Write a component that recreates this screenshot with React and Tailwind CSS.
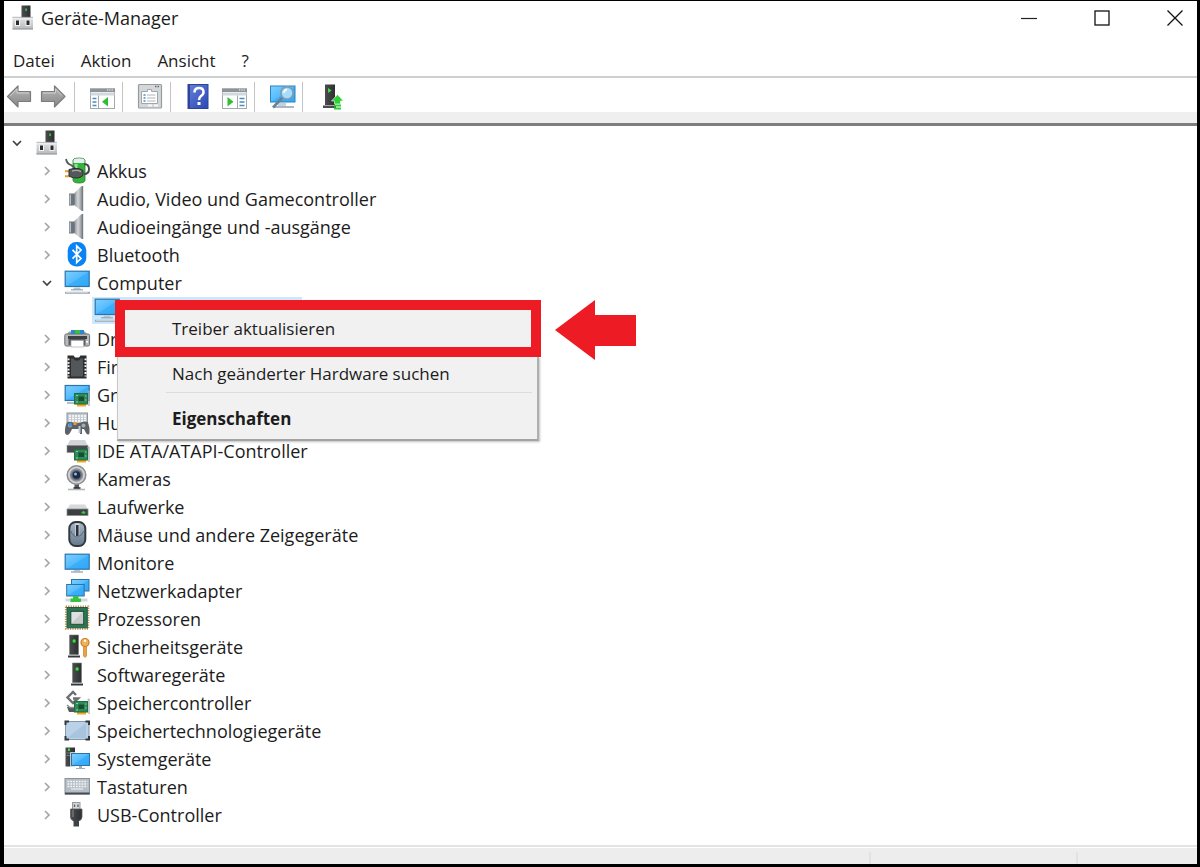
import { useState } from "react";

const Svg = ({ children }) => (
    <svg viewBox="0 0 26 26" className="size-[26px] shrink-0 overflow-visible" aria-hidden="true">
        {children}
    </svg>
);

/* shared gradients, referenced by id from the icons below */
const Gradients = () => (
    <svg className="absolute size-0" aria-hidden="true">
        <defs>
            <linearGradient id="screen" x1="0" y1="0" x2="1" y2="1">
                <stop offset="0" stopColor="#7fd0ff" />
                <stop offset="0.5" stopColor="#55bbfd" />
                <stop offset="0.52" stopColor="#3cb0fb" />
                <stop offset="1" stopColor="#33a6f5" />
            </linearGradient>
            <linearGradient id="metal" x1="0" y1="0" x2="0" y2="1">
                <stop offset="0" stopColor="#e2e3e5" />
                <stop offset="1" stopColor="#b8babd" />
            </linearGradient>
            <linearGradient id="cone" x1="0" y1="0" x2="1" y2="0">
                <stop offset="0" stopColor="#7d8287" />
                <stop offset="0.5" stopColor="#d5d8db" />
                <stop offset="1" stopColor="#85898e" />
            </linearGradient>
            <linearGradient id="dark" x1="0" y1="0" x2="1" y2="0">
                <stop offset="0" stopColor="#4a4c4f" />
                <stop offset="1" stopColor="#2c2e30" />
            </linearGradient>
            <linearGradient id="mouse" x1="0" y1="0" x2="0" y2="1">
                <stop offset="0" stopColor="#a9b9ca" />
                <stop offset="1" stopColor="#65778b" />
            </linearGradient>
            <linearGradient id="arrow" x1="0" y1="0" x2="0" y2="1">
                <stop offset="0" stopColor="#b9b9b9" />
                <stop offset="1" stopColor="#858585" />
            </linearGradient>
            <linearGradient id="help" x1="0" y1="0" x2="1" y2="1">
                <stop offset="0" stopColor="#6680d8" />
                <stop offset="1" stopColor="#2a48b4" />
            </linearGradient>
        </defs>
    </svg>
);

const Card = () => (
    <>
        <rect x="13" y="19" width="9" height="5.5" fill="#f5a81c" />
        <rect x="10.5" y="11.5" width="13" height="10.5" fill="#2f8a57" stroke="#1f6d42" />
        <rect x="14.5" y="14.5" width="5.5" height="4.5" fill="#174d30" />
        <path d="M12 13.5h2M21 14h1.5M12 20h2M21 18h1.5" stroke="#86d3a2" strokeWidth="1.2" />
        <path d="M23.5 9.5h1.5V24" fill="none" stroke="#a9adb0" strokeWidth="1.3" />
    </>
);

const Tower = ({ x = 7, y = 1 }) => (
    <g transform={`translate(${x} ${y})`}>
        <path d="M1.5 0h9v20h-9z" fill="url(#dark)" stroke="#77797b" strokeWidth="0.6" />
        <path d="M0 20.5h12v2H0z" fill="#35373a" />
        <path d="M1 20h10" stroke="#d8d8d8" strokeWidth="0.7" />
        <rect x="4" y="4" width="4" height="4" rx="0.5" fill="#1a5f1d" />
        <rect x="4.7" y="4.5" width="2.8" height="3" rx="0.5" fill="#3ee03d" />
    </g>
);

const DeviceHub = () => (
    <Svg>
        <rect x="11.5" y="0.5" width="9" height="13" fill="url(#dark)" />
        <rect x="15.2" y="3.5" width="1.8" height="2.5" fill="#2fc238" />
        <path d="M2.5 12.5h20.5v11.5H2.5z" fill="url(#metal)" />
        <path d="M2.5 12.5h20.5v2H2.5z" fill="#ededee" />
        <path d="M2.5 12.3h20.5" stroke="#a6a8ab" strokeWidth="0.8" />
        <path d="M2.5 24h20.5" stroke="#97999c" strokeWidth="1.2" />
        <rect x="5" y="15" width="5" height="6" fill="#f3f3f3" />
        <rect x="15.5" y="15" width="5" height="6" fill="#f3f3f3" />
        <rect x="6" y="15.5" width="3" height="4.5" fill="#2a2a2a" />
        <rect x="16.5" y="15.5" width="3" height="4.5" fill="#2a2a2a" />
    </Svg>
);

const Battery = () => (
    <Svg>
        <path d="M9 2q0-2 6-2t6 2v20q0 3-6 3t-6-3z" fill="#34b43a" stroke="#25792a" strokeWidth="0.8" />
        <path d="M9.5 2q0-1.700 5.5-1.700t5.5 1.700v3h-11z" fill="#e4edf2" />
        <path d="M10.500 6h3v4h-3z" fill="#8ae88b" />
        <path d="M2 1q1 5 5 6l4 3" fill="none" stroke="#53575a" strokeWidth="1.8" />
        <path d="M20 6q5 0 5 5t-5 5" fill="none" stroke="#43474a" strokeWidth="2" />
        <path d="M1 13.200h5M1 18.200h5" stroke="#e49b2c" strokeWidth="2" />
        <path d="M5 11.500l5-1q5-1 9 2v5q-3 2.500-6 2.500-4 0-6-1l-2-1z" fill="#55585b" stroke="#2c2e30" />
        <path d="M8 13q5-1.500 9 0.500" stroke="#a5a9ac" strokeWidth="1.4" fill="none" />
    </Svg>
);

const Speaker = () => (
    <Svg>
        <path d="M5 7.5h5v12H5z" fill="#707579" />
        <path d="M5.5 8.5h1.5v10H5.5z" fill="#adc3d4" />
        <path d="M9.5 8L17 0.5q1.5-1 1.5 1v22q0 2-1.5 1L9.5 18.5z" fill="url(#cone)" />
        <path d="M18.5 0v25" stroke="#777c81" strokeWidth="1.4" />
        <path d="M10 8.5v10" stroke="#5e6266" strokeWidth="0.8" />
    </Svg>
);

const Bluetooth = () => (
    <Svg>
        <rect x="3.7" y="0" width="18.6" height="24.5" rx="8.5" fill="#0a84f5" />
        <path d="M8.5 7.8l8.5 8.7-4.3 4V4l4.3 4-8.5 8.7" fill="none" stroke="#fff" strokeWidth="1.7" />
    </Svg>
);

const Computer = () => (
    <Svg>
        <rect x="1.2" y="1.2" width="24" height="15.3" fill="url(#screen)" stroke="#2c74a8" strokeWidth="1.2" />
        <path d="M10 17.5h6l1 2.5H9z" fill="#b9c5ce" />
        <path d="M7 19.8h12" stroke="#9ba9b3" strokeWidth="1.2" />
        <path d="M1 22.8h25" stroke="#9aaab5" strokeWidth="2" />
        <path d="M2 22.3h22" stroke="#dfe7ec" strokeWidth="0.8" />
    </Svg>
);

const Printer = () => (
    <Svg>
        <path d="M3 8l2-2.5h16L23 8z" fill="#9ca0a4" />
        <rect x="7" y="4" width="13" height="5" fill="#2687dc" />
        <rect x="11" y="4" width="5" height="5" fill="#36c436" />
        <rect x="0.8" y="8" width="24.8" height="12" rx="1.5" fill="#b7babd" stroke="#6c7074" />
        <path d="M4 10h19v3H4z" fill="#3d4043" />
        <path d="M4.5 13h17v6h-17z" fill="#5a5e62" />
        <path d="M7 14.5h12.5V21H7z" fill="#fff" stroke="#a9a9a9" strokeWidth="0.7" />
        <rect x="22" y="15" width="2" height="1.6" fill="#fff" />
    </Svg>
);

const Firmware = () => (
    <Svg>
        <path d="M3.5 1.5h6l1.500 2h4l1.500-2h6v23h-19z" fill="#2b2d2f" />
        <path d="M4.500 4.500v18M21.500 4.500v18" stroke="#f4f4f4" strokeWidth="2" strokeDasharray="1.800 1.600" />
        <path d="M7 4.500h2.500l1.500 2h4l1.500-2H19v18H7z" fill="#54575a" />
    </Svg>
);

const Graphics = () => (
    <Svg>
        <rect x="1.2" y="3.5" width="24" height="15" fill="url(#screen)" stroke="#2c74a8" strokeWidth="1.2" />
        <path d="M3 21h9" stroke="#b4c0c8" strokeWidth="2" />
        <Card />
    </Svg>
);

const Hid = () => (
    <Svg>
        <rect x="3" y="3" width="20.5" height="11" fill="#c3c9cf" stroke="#8e969d" />
        <path d="M5 6h17M5 8.5h17M5 11h17" stroke="#fff" strokeWidth="1.3" strokeDasharray="2 1" />
        <path d="M3 12.5q2-1.5 6 0t8 0q5-2 7 0 2 5 1.5 10.5-1 3-3.5 0l-2-4h-2v5h-2v-5H8l-2 4q-3 4-5 0-.5-6 2-10.5z" fill="#5c6267" />
        <circle cx="6" cy="15.5" r="2" fill="#a4adb5" />
        <circle cx="19.5" cy="15.5" r="2" fill="#a4adb5" />
        <path d="M5 13.5h3v3H5z" fill="#2c98ee" />
        <path d="M9.5 12h3v3h-3z" fill="#ed9b2d" />
        <path d="M14.5 16h2v7h-2z" fill="#c3cad0" />
    </Svg>
);

const Ide = () => (
    <Svg>
        <path d="M6 2h15l3 6H3z" fill="#d2d4d6" />
        <rect x="3" y="7.5" width="21" height="7" fill="#484b4e" stroke="#8c8f92" strokeWidth="0.6" />
        <Card />
    </Svg>
);

const Camera = () => (
    <Svg>
        <path d="M10.5 18h4.5v4h-4.5z" fill="#55585b" />
        <path d="M4 23.5h17" stroke="#b4b7ba" strokeWidth="1.6" />
        <path d="M9.5 22h7" stroke="#333" strokeWidth="1.6" />
        <circle cx="12.5" cy="9" r="9.3" fill="#d0d1d3" stroke="#8b8e91" strokeWidth="1.5" />
        <circle cx="12.5" cy="9" r="6" fill="#606a75" stroke="#8d9297" strokeWidth="1.5" />
        <circle cx="12.5" cy="9" r="3.800" fill="#1d2a44" />
        <circle cx="11.5" cy="8" r="1.500" fill="#8fbbe6" />
    </Svg>
);

const Drive = () => (
    <Svg>
        <path d="M6 10.5h15l3 5H3z" fill="#d8d9da" />
        <rect x="3" y="15" width="21" height="6.5" fill="#3c3f42" stroke="#8b8e91" strokeWidth="0.8" />
        <path d="M17.5 18.5h4M19.5 17v3" stroke="#2dd13a" strokeWidth="1.6" />
    </Svg>
);

const Mouse = () => (
    <Svg>
        <rect x="5.3" y="0" width="16" height="24" rx="6.5" fill="url(#mouse)" stroke="#34383d" strokeWidth="2" />
        <path d="M13.3 1.5v13" stroke="#d3dce5" strokeWidth="4" />
        <path d="M13.3 3v11" stroke="#2c3239" strokeWidth="2.6" />
        <path d="M7 9q1 5 6.3 6 5-1 6.3-6" fill="none" stroke="#5c6d80" />
    </Svg>
);

const Monitor = () => (
    <Svg>
        <rect x="1.2" y="4.2" width="24" height="15" fill="url(#screen)" stroke="#2c74a8" strokeWidth="1.2" />
        <path d="M10 20h6v1.5h-6z" fill="#b7c4cd" />
        <path d="M7 22h12" stroke="#8c9ca8" strokeWidth="1.2" />
    </Svg>
);

const Network = () => (
    <Svg>
        <rect x="7.5" y="1.5" width="17.5" height="11.5" fill="url(#screen)" stroke="#2c74a8" />
        <rect x="2.7" y="6.5" width="17.5" height="11.5" fill="url(#screen)" stroke="#2c74a8" />
        <path d="M1.5 20.5h22v3h-22z" fill="#d5d8da" />
        <path d="M9 18h5.5v2.5H17V24H6.5v-3.5H9z" fill="#35c43f" />
    </Svg>
);

const Processor = () => (
    <Svg>
        <rect x="1.8" y="0.3" width="22.6" height="22.6" fill="none" stroke="#c08a4a" strokeWidth="1.8" strokeDasharray="1.2 1.2" />
        <rect x="3" y="1.5" width="20.3" height="20.3" fill="#2d7552" stroke="#205b3e" />
        <rect x="6.800" y="5.300" width="12.800" height="12.800" fill="#dfe0e1" stroke="#17482f" />
        <path d="M7.300 17.600L19.100 5.800v11.800z" fill="#c8cacc" />
    </Svg>
);

const Security = () => (
    <Svg>
        <Tower x={4} y={1} />
        <circle cx="21" cy="8.5" r="4" fill="#f2b05a" stroke="#c97e1e" strokeWidth="1.2" />
        <circle cx="21" cy="6.8" r="1.2" fill="#fff" />
        <path d="M19.5 12.5h3V22L21 23.5 19.500 22z" fill="#eba445" stroke="#c97e1e" strokeWidth="0.7" />
    </Svg>
);

const Software = () => (
    <Svg>
        <Tower />
    </Svg>
);

const StorageController = () => (
    <Svg>
        <path d="M3 17h12v5H5z" fill="#55585b" />
        <path d="M12 5L9 2 3.5 7.5 9 13l5-4.5H9" fill="none" stroke="#6b6f73" strokeWidth="2.4" />
        <path d="M3 15l3 2.5h6" fill="none" stroke="#8d9194" strokeWidth="1.6" />
        <Card />
    </Svg>
);

const StorageTech = () => (
    <Svg>
        <rect x="1.5" y="3.5" width="23.5" height="18" rx="1.5" fill="#b9d2e8" stroke="#8497a8" />
        <path d="M3 20L22 5v15z" fill="#a9c5de" />
        <path d="M1.5 7V3.5H5M21.500 3.5H25V7M25 18v3.5h-3.5M5 21.5H1.5V18" fill="none" stroke="#33373b" strokeWidth="2" />
    </Svg>
);

const SystemIcon = () => (
    <Svg>
        <path d="M1.5 1.5H11v19H1.5z" fill="url(#dark)" />
        <rect x="4" y="2.5" width="2" height="2.5" fill="#3ee03d" />
        <path d="M2.5 7h7M2.5 9.5h7" stroke="#85898c" strokeWidth="0.8" />
        <rect x="7.5" y="7.5" width="18" height="12" fill="#fff" stroke="#fff" strokeWidth="2.4" />
        <rect x="7.5" y="7.5" width="18" height="12" fill="url(#screen)" stroke="#2c74a8" />
        <path d="M15 20h3v2h3v1h-9v-1h3z" fill="#9fb0bc" />
    </Svg>
);

const Keyboard = () => (
    <Svg>
        <rect x="1" y="4.5" width="24.5" height="15.5" fill="#b5bdc5" stroke="#8b939b" />
        <path d="M3.5 7.5h20M3.5 10h20M3.5 12.5h20" stroke="#f4f6f8" strokeWidth="1.5" strokeDasharray="1.8 1" />
        <path d="M7 15h12" stroke="#e5e9ed" strokeWidth="1.3" />
        <path d="M1 18.5h24.5v2H1z" fill="#454b52" />
    </Svg>
);

const Usb = () => (
    <Svg>
        <rect x="8.5" y="0.5" width="7.5" height="7" fill="#d4d6d8" stroke="#96999c" />
        <path d="M10.5 2.5V5M14 2.5V5" stroke="#5c5f62" strokeWidth="1.3" />
        <path d="M6.5 7H18v8q0 3-3.5 4H10q-3.5-1-3.5-4z" fill="url(#dark)" stroke="#5f6265" strokeWidth="0.8" />
        <path d="M9.5 18H15v6.500H9.5z" fill="#404346" />
        <path d="M9 8v7" stroke="#8b8e91" />
    </Svg>
);

/* toolbar */
const Back = () => (
    <Svg>
        <path d="M1.5 12.5L12 2v5.500h12.500v10H12V23z" fill="url(#arrow)" stroke="#7c7c7c" strokeWidth="1.2" strokeLinejoin="round" />
        <path d="M4 12l7-7v4h12" fill="none" stroke="#cfcfcf" />
    </Svg>
);

const Forward = () => (
    <Svg>
        <path d="M25 12.5L14.5 2v5.500h-13v10h13V23z" fill="url(#arrow)" stroke="#7c7c7c" strokeWidth="1.2" strokeLinejoin="round" />
        <path d="M3 9h12.500V5l6.500 6.500" fill="none" stroke="#cfcfcf" />
    </Svg>
);

const PaneFrame = ({ children }) => (
    <Svg>
        <rect x="1.5" y="5" width="24" height="19.5" fill="#fff" stroke="#a3a8ad" />
        <path d="M1 4.5h25v3.500H1z" fill="#8d9399" />
        <path d="M18 6h6" stroke="#fff" strokeDasharray="1.3 1" />
        <path d="M1.5 8.5h24v3h-24z" fill="#d3d8dc" />
        {children}
    </Svg>
);

const ShowTree = () => (
    <PaneFrame>
        <path d="M9.5 11.5V24" stroke="#a3a8ad" />
        <path d="M3.5 14.5h4M3.5 18h4M3.5 21.5h4" stroke="#4d89bd" strokeWidth="1.5" />
        <path d="M19 13v9.500l-6-4.700z" fill="#2fbd35" />
    </PaneFrame>
);

const ShowActions = () => (
    <PaneFrame>
        <path d="M16.5 11.5V24" stroke="#a3a8ad" />
        <path d="M18.5 14.5h5M18.5 18h5M18.5 21.5h5" stroke="#4d89bd" strokeWidth="1.5" />
        <path d="M6.5 13v9.500l6-4.700z" fill="#2fbd35" />
    </PaneFrame>
);

const Properties = () => (
    <Svg>
        <rect x="1.5" y="0.5" width="23" height="23.5" rx="1" fill="#d4d7da" stroke="#969ba0" strokeWidth="1.2" />
        <path d="M18 2.5h5" stroke="#62676c" strokeWidth="1.5" strokeDasharray="1.5 1" />
        <path d="M4.5 7.5h6v-2h4v2h6v12h-16z" fill="#fff" stroke="#a0a5aa" />
        <path d="M6.5 11h2M6.5 14h2M6.5 17h2" stroke="#4d89bd" strokeWidth="1.5" />
        <path d="M10 11h8.500M10 14h8.500M10 17h8.500" stroke="#b0b4b8" />
        <path d="M11 21.5h4M17 21.5h4" stroke="#f8f8f8" strokeWidth="2" />
    </Svg>
);

const Help = () => (
    <Svg>
        <rect x="3" y="0.5" width="20" height="24" fill="url(#help)" stroke="#2e449a" />
        <path d="M4 1v23" stroke="#2e449a" strokeWidth="2" />
        <path d="M9.5 8.5Q9.500 4 14 4t4.500 4q0 2.500-2.500 4-2 1.500-2 4" fill="none" stroke="#fff" strokeWidth="2.5" />
        <rect x="12.5" y="18" width="3" height="3" fill="#fff" />
    </Svg>
);

const Scan = () => (
    <Svg>
        <rect x="1.5" y="2" width="24.5" height="16" fill="url(#screen)" stroke="#2c84bd" />
        <path d="M9 19h8v3H9z" fill="#c6d2da" />
        <path d="M5 23h20" stroke="#8fa0ac" strokeWidth="1.5" />
        <path d="M13.5 13.5L4 23.5" stroke="#698196" strokeWidth="2.6" />
        <circle cx="18" cy="9" r="6.2" fill="#a8dcfb" stroke="#7c9db6" strokeWidth="1.8" />
        <path d="M15 9q0-3 3-3.500" stroke="#fff" strokeWidth="1.5" fill="none" />
    </Svg>
);

const Update = () => (
    <Svg>
        <rect x="8" y="0.5" width="10" height="20.500" fill="url(#dark)" />
        <path d="M6 21.5h13V24H6z" fill="#4a4d50" />
        <path d="M11 4l3.500 2.500L11 9z" fill="#3ee03d" />
        <path d="M20.500 10.500l6 6.500h-3v3h-6v-3h-3z" fill="#2fcf38" stroke="#fff" strokeWidth="0.6" />
        <path d="M17 21.500h7M17 24.500h7" stroke="#2fcf38" strokeWidth="1.8" />
    </Svg>
);

const Chevron = ({ open }) => (
    <svg viewBox="0 0 18 18" className="size-[18px]" fill="none" aria-hidden="true">
        {open ? (
            <path d="M5 7l4 4 4-4" stroke="#404040" strokeWidth="1.7" />
        ) : (
            <path d="M7 5l4 4-4 4" stroke="#a6a6a6" strokeWidth="1.7" />
        )}
    </svg>
);

const categories = [
    { label: "Akkus", icon: Battery },
    { label: "Audio, Video und Gamecontroller", icon: Speaker },
    { label: "Audioeingänge und -ausgänge", icon: Speaker },
    { label: "Bluetooth", icon: Bluetooth },
    { label: "Computer", icon: Computer, hasDevice: true },
    { label: "Drucker", icon: Printer },
    { label: "Firmware", icon: Firmware },
    { label: "Grafik", icon: Graphics },
    { label: "Human", icon: Hid },
    { label: "IDE ATA/ATAPI-Controller", icon: Ide },
    { label: "Kameras", icon: Camera },
    { label: "Laufwerke", icon: Drive },
    { label: "Mäuse und andere Zeigegeräte", icon: Mouse },
    { label: "Monitore", icon: Monitor },
    { label: "Netzwerkadapter", icon: Network },
    { label: "Prozessoren", icon: Processor },
    { label: "Sicherheitsgeräte", icon: Security },
    { label: "Softwaregeräte", icon: Software },
    { label: "Speichercontroller", icon: StorageController },
    { label: "Speichertechnologiegeräte", icon: StorageTech },
    { label: "Systemgeräte", icon: SystemIcon },
    { label: "Tastaturen", icon: Keyboard },
    { label: "USB-Controller", icon: Usb },
];

const toolGroups = [
    [{ label: "Konsolenstruktur ein-/ausblenden", icon: ShowTree }],
    [{ label: "Eigenschaften anzeigen", icon: Properties }],
    [{ label: "Hilfe", icon: Help }, { label: "Aktionsbereich ein-/ausblenden", icon: ShowActions }],
    [{ label: "Nach Hardware suchen", icon: Scan }],
    [{ label: "Gerätetreiber aktualisieren", icon: Update }],
];

const ToolButton = ({ label, icon: Icon }) => (
    <button aria-label={label} className="block">
        <Icon />
    </button>
);

const TitleBar = () => (
    <header className="flex h-[34px] items-center justify-between">
        <div className="flex items-center gap-[5px] pl-1.5">
            <DeviceHub />
            <h1>Geräte-Manager</h1>
        </div>
        <div className="flex gap-[29px]">
            <button aria-label="Minimieren" className="flex h-[34px] w-11 items-center justify-center">
                <svg width="16" height="16" aria-hidden="true"><path d="M0 8.500h16" stroke="#222" strokeWidth="1.2" /></svg>
            </button>
            <button aria-label="Maximieren" className="flex h-[34px] w-11 items-center justify-center">
                <svg width="16" height="16" aria-hidden="true"><rect x="1" y="1" width="14" height="14" fill="none" stroke="#111" strokeWidth="1.3" /></svg>
            </button>
            <button aria-label="Schließen" className="flex h-[34px] w-11 items-center justify-center">
                <svg width="16" height="16" aria-hidden="true"><path d="M0.500 0.500l15 15M15.500 0.500l-15 15" stroke="#111" strokeWidth="1.3" /></svg>
            </button>
        </div>
    </header>
);

const MenuBar = () => (
    <nav className="flex h-[41px] items-center gap-[26px] pt-2.5 pl-[9px] text-[17px]">
        <button>Datei</button>
        <button>Aktion</button>
        <button>Ansicht</button>
        <button>?</button>
    </nav>
);

const Toolbar = () => (
    <div className="flex border-t-2 border-[#cdcfd1] pt-1 pl-0.5">
        <div className="flex items-center gap-2 py-0.5 pr-2">
            <ToolButton label="Zurück" icon={Back} />
            <ToolButton label="Vorwärts" icon={Forward} />
        </div>
        {toolGroups.map((group, i) => (
            <div key={i} className="flex items-center gap-2.5 border-l border-[#c4c4c4] py-0.5 pr-[7px] pl-3.5">
                {group.map((tool) => <ToolButton key={tool.label} {...tool} />)}
            </div>
        ))}
    </div>
);

const ContextMenu = () => (
    <div className="absolute top-[3px] left-[23px] z-10 w-[426px] text-[17px]">
        <div className="border-10 border-[#ed1c24] bg-[#f1f1f1]">
            <button className="block w-full py-1.5 pl-[47px] text-left">Treiber aktualisieren</button>
        </div>
        <div className="mx-0.5 flex flex-col border-r-2 border-b-2 border-l border-r-[#b0b0b0] border-b-[#a3a3a3] border-l-[#c8c8c8] bg-[#f1f1f1] pr-[5px] pb-1 shadow-[1px_1px_2px_#00000040]">
            <button className="py-1 pl-[54px] text-left">Nach geänderter Hardware suchen</button>
            <hr className="mt-0.5 mb-[9px] ml-12 border-[#dcdcdc]" />
            <button className="py-1 pl-[54px] text-left font-bold">Eigenschaften</button>
        </div>
        <svg viewBox="0 0 81 60" className="absolute top-0 left-full ml-3.5 h-[60px] w-[81px]" aria-hidden="true">
            <path d="M0 30L40 0v15h41v31H40v14z" fill="#ed1c24" />
        </svg>
    </div>
);

const Category = ({ label, icon: Icon, hasDevice = false }) => {
    const [open, setOpen] = useState(hasDevice);

    return (
        <li>
            <div className="flex h-7 items-center pl-[34px]">
                <button aria-label={label} aria-expanded={open} onClick={() => setOpen(!open)}>
                    <Chevron open={open} />
                </button>
                <span className="ml-2 flex items-center gap-[7px]">
                    <Icon />
                    {label}
                </span>
            </div>
            {hasDevice && open && (
                <div className="relative ml-[88px] h-7 w-[210px]">
                    <div className="flex h-[27px] items-center bg-[#cce8ff] pl-0.5">
                        <Computer />
                    </div>
                    <ContextMenu />
                </div>
            )}
        </li>
    );
};

const DeviceTree = () => (
    <main className="grow pt-[3px]">
        <div className="flex h-7 items-center gap-2 pl-1">
            <button aria-label="Computerknoten" aria-expanded="true"><Chevron open /></button>
            <DeviceHub />
        </div>
        <ul>
            {categories.map((item) => <Category key={item.label} {...item} />)}
        </ul>
    </main>
);

const StatusBar = () => (
    <footer className="border-t-2 border-[#e3e3e3] pt-px">
        <div className="flex h-4 bg-[#ededed] pt-1">
            <div className="grow" />
            <div className="w-[207px] border-l-2 border-[#e2e2e2]" />
            <div className="w-[121px] border-l-2 border-[#e2e2e2]" />
        </div>
    </footer>
);

const App = () => (
    <div className="flex min-h-screen flex-col border-t border-r-3 border-b-3 border-l-4 border-black bg-white font-['Open_Sans','Noto_Sans',sans-serif] text-lg leading-[25px] text-[#1c1c1c]">
        <Gradients />
        <TitleBar />
        <MenuBar />
        <Toolbar />
        <div className="h-3.5 border-b-3 border-[#7d7d7d] bg-[#efefef]" />
        <DeviceTree />
        <StatusBar />
    </div>
);

export default App;
